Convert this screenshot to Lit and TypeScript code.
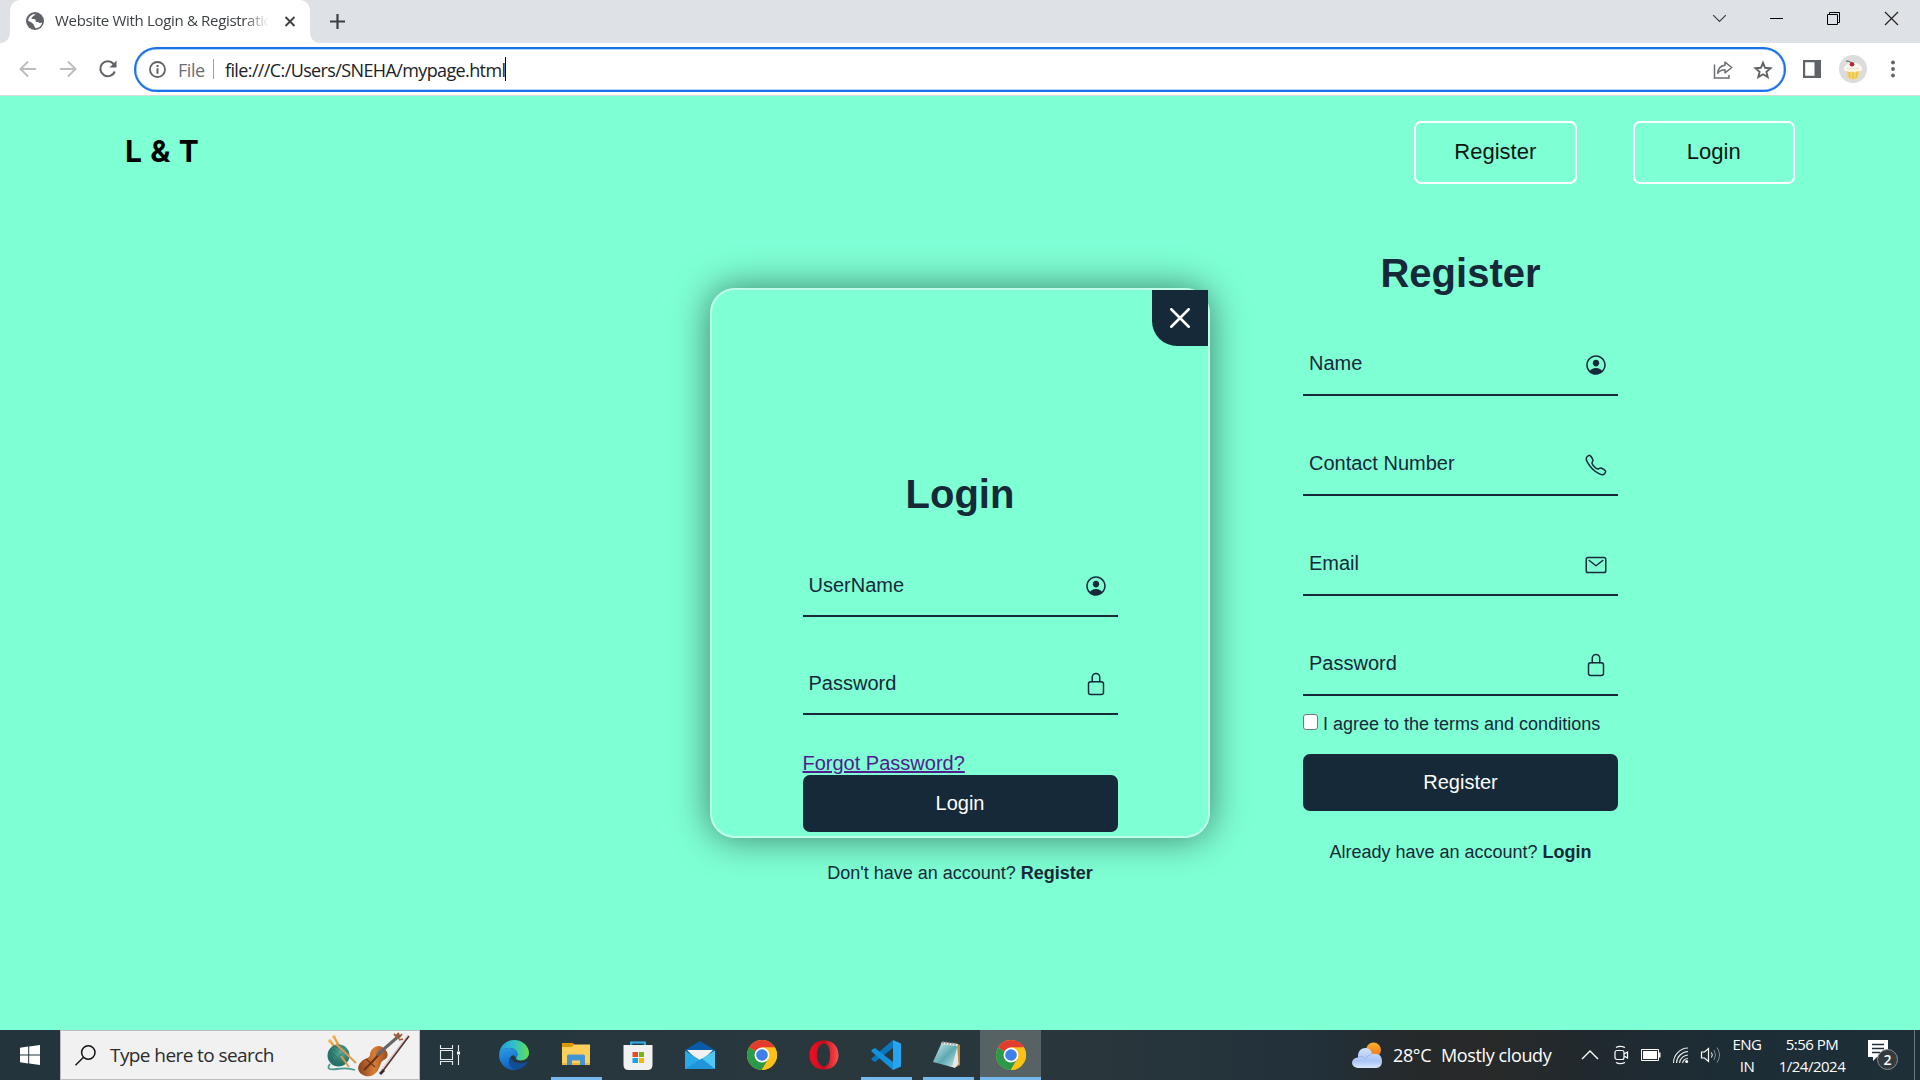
import { LitElement, html, svg, css, type TemplateResult } from "lit";
import { customElement, property } from "lit/decorators.js";

const icons: Record<string, TemplateResult> = {
  person: svg`<path fill="currentColor" d="M258.9 48C141.92 46.42 46.42 141.92 48 258.9c1.56 112.19 92.91 203.54 205.1 205.1 117 1.6 212.48-93.9 210.88-210.88C462.44 140.91 371.09 49.56 258.9 48zm126.42 327.25a4 4 0 01-6.14-.32 124.27 124.27 0 00-32.35-29.59C321.37 329 289.11 320 256 320s-65.37 9-90.83 25.34a124.24 124.24 0 00-32.35 29.58 4 4 0 01-6.14.32A175.32 175.32 0 0180 259c-1.63-97.31 78.22-178.76 175.57-179S432 158.81 432 256a175.32 175.32 0 01-46.68 119.25z"/><path fill="currentColor" d="M256 144c-19.72 0-37.55 7.39-50.22 20.82s-19 32-17.57 51.93C191.11 256 221.52 288 256 288s64.83-32 67.79-71.24c1.48-19.74-4.8-38.14-17.68-51.82C293.39 151.44 275.59 144 256 144z"/>`,
  lock: svg`<path d="M336 208v-95a80 80 0 00-160 0v95"/><rect x="96" y="208" width="320" height="272" rx="48"/>`,
  mail: svg`<rect x="48" y="96" width="416" height="320" rx="40"/><path d="M112 160l144 112 144-112"/>`,
  call: svg`<path d="M451 374c-15.88-16-54.34-39.35-73-48.76-24.3-12.24-26.3-13.24-45.4.95-12.74 9.47-21.21 17.93-36.12 14.75s-47.31-21.11-75.68-49.39-47.34-61.62-50.53-76.48 5.41-23.23 14.79-36c13.22-18 12.22-21 .92-45.3-8.81-18.9-32.84-57-48.9-72.8C119.9 44 119.9 47 108.83 51.6A160.15 160.15 0 0083 65.37C67 76 58.12 84.83 51.91 98.1s-9 44.38 23.07 102.64 54.57 88.05 101.14 134.49S258.5 406.64 310.85 436c64.76 36.27 89.6 29.2 102.91 23s22.18-15 32.83-31a159.09 159.09 0 0013.8-25.8C465 391.17 468 391.17 451 374z"/>`,
  close: svg`<path d="M368 368L144 144M368 144L144 368"/>`,
};

@customElement("ion-glyph")
class IonGlyph extends LitElement {
  @property() name = "person";
  static styles = css`
    :host { display: block; width: 24px; height: 24px; }
    svg { display: block; width: 100%; height: 100%; }
    .line { fill: none; stroke: currentColor; stroke-width: 32; stroke-linecap: round; stroke-linejoin: round; }
  `;
  render() {
    const solid = this.name === "person";
    return html`<svg viewBox="0 0 512 512"><g class=${solid ? "" : "line"}>${icons[this.name]}</g></svg>`;
  }
}

@customElement("form-field")
class FormField extends LitElement {
  @property() label = "";
  @property() icon = "person";
  static styles = css`
    :host { display: flex; justify-content: space-between; box-sizing: border-box; width: 315px; height: 62px;
      border-bottom: 2px solid #162938; padding: 0 10px 0 6px; color: #162938; }
    .label { font-size: 20px; line-height: var(--label-line, 58px); }
    ion-glyph { margin-top: 19px; }
  `;
  render() {
    return html`<span class="label">${this.label}</span><ion-glyph name=${this.icon}></ion-glyph>`;
  }
}

@customElement("browser-chrome")
class BrowserChrome extends LitElement {
  static styles = css`
    :host { display: block; font-family: "Open Sans", "Noto Sans", sans-serif; }
    svg { display: block; overflow: visible; flex: none; }
    .strip { height: 43px; background: #dee1e6; display: flex; align-items: flex-start; }
    .edge { width: 10px; height: 43px; background: radial-gradient(circle at 0 33px, #dee1e6 9.5px, #fff 10.5px) 0 0; clip-path: inset(33px 0 0 0); }
    .edge.right { background: radial-gradient(circle at 10px 33px, #dee1e6 9.5px, #fff 10.5px); }
    .tab { width: 300px; height: 43px; background: #fff; border-radius: 10px 10px 0 0; display: flex; align-items: flex-start; box-sizing: border-box; padding-left: 16px; }
    .globe { margin-top: 12px; width: 18px; height: 18px; }
    .title { margin: 8px 0 0 11px; width: 214px; overflow: hidden; white-space: nowrap; font-size: 15px; line-height: 25px; color: #3c4043; letter-spacing: -0.32px;
      -webkit-mask-image: linear-gradient(90deg, #000 88%, transparent 100%); mask-image: linear-gradient(90deg, #000 88%, transparent 100%); }
    .x { margin: 16px 0 0 16px; width: 10px; height: 11px; }
    .plus { margin: 14px 0 0 10px; width: 15px; height: 15px; }
    .window { margin-left: auto; display: flex; gap: 44.3px; padding: 12px 22.5px 0 0; }
    .window svg { width: 13px; height: 13px; }
    .bar { height: 52px; background: #fff; display: flex; align-items: center; border-bottom: 1px solid #d5dcdc; }
    .nav { width: 116px; padding-left: 18px; display: flex; gap: 20px; }
    .nav svg { width: 20px; height: 20px; }
    .pill { box-sizing: border-box; width: 1652px; height: 45px; border: 2.5px solid #1a73e8; box-shadow: inset 0 0 0 .5px #6ea6f0; border-radius: 23px; display: flex; align-items: center; padding-left: 13px; white-space: nowrap; }
    .info { width: 17px; height: 17px; }
    .scheme { margin: 2px 0 0 12px; width: 35px; font-size: 18px; letter-spacing: -0.45px; color: #6b6e72; line-height: 25px; }
    .divider { width: 1px; height: 20px; background: #9aa0a6; margin-right: 11px; }
    .url { margin-top: 2px; font-size: 18px; letter-spacing: -0.62px; color: #202124; line-height: 25px; }
    .caret { width: 1px; height: 24px; background: #000; }
    .actions { margin-left: auto; display: flex; gap: 20px; padding: 1px 11px 0 0; }
    .actions svg { width: 20px; height: 20px; }
    .tools { display: flex; align-items: center; padding-left: 17px; }
    .avatar { margin-left: 18px; }
    .dots { margin-left: 23.5px; }
  `;
  render() {
    return html`
      <div class="strip">
        <div class="edge"></div>
        <div class="tab">
          <svg class="globe" viewBox="0 0 18 18"><circle cx="9" cy="9" r="9" fill="#5f6368"/><path fill="#fff" d="M10 2.1c-1.5.3-1.2 1.6-2.6 2-.8.2-.6 1.3-1.5 1.5-.8.3-.4 1.2.3 1.4 1 .3 2.400-.2 3.200.7.8.9-.2 1.400.6 2 .9.500 2.200-.2 2.800.7.5.8 1.200.9 2.200.3.6-.4 1 .1.900.5-.7 2.700-3 4.800-6 5-1.500 0-.7-1.500-1.500-2-.9-.5-.2-1.800-1.200-2.300C6 10.900 4.300 9.300 2.200 9v-.5C2.500 5 5.600 1.800 10 2.100z"/><path fill="#5f6368" d="M9.500 3.500c-1 .5.500 1.300-.5 2.200s.8 1.700 2 1.200c1.300-.6 1.800.8 1 1.300-.7.600 1.500 1 3 .4L14.500 4.500 11 2.500z"/></svg>
          <span class="title">Website With Login &amp; Registration</span>
          <svg class="x" viewBox="0 0 10 11"><path d="M.5 1l9 9M9.500 1l-9 9" stroke="#3c4043" stroke-width="1.900"/></svg>
        </div>
        <div class="edge right"></div>
        <svg class="plus" viewBox="0 0 15 15"><path d="M7.500 0v15M0 7.500h15" stroke="#3c4043" stroke-width="2.200"/></svg>
        <div class="window">
          <svg viewBox="0 0 13 13"><path d="M.2 3.200l6.300 6.300 6.300-6.300" fill="none" stroke="#3c4043" stroke-width="1.200"/></svg>
          <svg viewBox="0 0 13 13"><path d="M0 6.500h13" stroke="#000"/></svg>
          <svg viewBox="0 0 13 13"><path d="M.5 2.500h10v10H.5zM2.500 2.500V.5h10v10h-2" fill="none" stroke="#000"/></svg>
          <svg viewBox="0 0 13 13"><path d="M0 0l13 13M13 0L0 13" stroke="#222" stroke-width="1.200"/></svg>
        </div>
      </div>
      <div class="bar">
        <div class="nav">
          <svg viewBox="0 0 20 20"><path d="M18 10H3M10 2.500L2.500 10l7.500 7.500" fill="none" stroke="#babcbe" stroke-width="1.900"/></svg>
          <svg viewBox="0 0 20 20"><path d="M2 10h15M10 2.500l7.500 7.500-7.500 7.500" fill="none" stroke="#babcbe" stroke-width="1.900"/></svg>
          <svg viewBox="0 0 20 20"><path d="M16.800 12.500A7.500 7.500 0 1 1 15.600 5" fill="none" stroke="#5f6368" stroke-width="2.100"/><path d="M18.500 1.500v7h-7z" fill="#5f6368"/></svg>
        </div>
        <div class="pill">
          <svg class="info" viewBox="0 0 17 17"><circle cx="8.500" cy="8.500" r="7.500" fill="none" stroke="#5f6368" stroke-width="1.800"/><path d="M8.500 4v2M8.500 7.300v5.400" stroke="#5f6368" stroke-width="2"/></svg>
          <span class="scheme">File</span><span class="divider"></span>
          <span class="url">file:///C:/Users/SNEHA/mypage.html</span><span class="caret"></span>
          <div class="actions">
            <svg viewBox="0 0 20 20"><path d="M1.500 4.500V18H16v-3" fill="none" stroke="#6b6e72" stroke-width="1.500"/><path d="M12 2.200l6.800 5.300-6.800 5.300v-3c-3.400 0-5.500 1-7.300 3.500C5 9 7.500 5.700 12 5.200z" fill="none" stroke="#6b6e72" stroke-width="1.500" stroke-linejoin="round"/></svg>
            <svg viewBox="0 0 20 20"><path d="M10 2.800l2.100 5 5.400.5-4.100 3.500 1.300 5.300L10 14.300l-4.700 2.800 1.300-5.300-4.100-3.500 5.400-.5z" fill="none" stroke="#5f6368" stroke-width="1.900"/></svg>
          </div>
        </div>
        <div class="tools">
          <svg width="18" height="18" viewBox="0 0 18 18"><path fill="#5f6368" fill-rule="evenodd" d="M0 0h18v18H0zM2.200 2.200v13.600h9.300V2.200z"/></svg>
          <svg class="avatar" width="28" height="28" viewBox="0 0 28 28"><circle cx="14" cy="14" r="14" fill="#dcdcdc"/><path d="M7 15h14l-2.500 8.500q-4.500 1.500-9 0z" fill="#f5d568"/><path d="M10 17l1 6M14 17v7M18 17l-1 6" stroke="#e7b93e"/><path d="M5 14.500c-.6-3 2-4 3-5 2-2.500 10-2.500 12 0 1.500 1 3.500 2.500 3 5-1 2.300-4 2-5 1.500-1.500 1.500-4 1.500-5 .3-1.500 1-3.500.8-4-.3-2 .8-3.600 0-4-1.500z" fill="#fff6ec"/><path d="M8 13.500q3 1.500 5-.5q3 2 7 0" fill="none" stroke="#ecd8c5"/><circle cx="13" cy="9.300" r="2.300" fill="#bd2430"/><path d="M12.500 8Q10 5.500 7 6" fill="none" stroke="#555"/></svg>
          <svg class="dots" width="4" height="18" viewBox="0 0 4 18"><g fill="#5f6368"><circle cx="2" cy="2.500" r="1.900"/><circle cx="2" cy="9" r="1.900"/><circle cx="2" cy="15.500" r="1.900"/></g></svg>
        </div>
      </div>`;
  }
}

@customElement("task-bar")
class TaskBar extends LitElement {
  static styles = css`
    :host { display: flex; height: 50px; color: #fff; white-space: nowrap; font-family: "Open Sans", "Noto Sans", sans-serif;
      background: linear-gradient(90deg, #23343c 0, #26363d 25%, #29383d 43%, #29373c 57%, #22313a 68%, #26292a 74%, #282a2a 78%, #20292f 83%, #1d2d35 90%, #1e2f38 100%); }
    svg { display: block; flex: none; overflow: visible; }
    .start { width: 60px; display: grid; place-items: center; }
    .search { box-sizing: border-box; width: 360px; height: 50px; background: #f1f1f1; border: 1px solid #bdbdbd; display: flex; align-items: center; padding-left: 14px; color: #2b2b2b; }
    .hint { margin-left: 14px; width: 217px; font-size: 19px; letter-spacing: -0.58px; line-height: 26px; }
    .view { width: 60px; display: grid; place-items: center; }
    .apps { display: flex; margin-left: 3px; }
    .app { width: 62px; height: 50px; box-sizing: border-box; display: grid; place-items: center; }
    .app.open { background: linear-gradient(#76b9ed, #76b9ed) center bottom / 51px 3px no-repeat; }
    .app.active { width: 61px; margin-left: 1px; background: linear-gradient(#76b9ed, #76b9ed) center bottom / 100% 3px no-repeat, #566264; }
    .tray { margin-left: auto; display: flex; align-items: center; }
    .weather { font-size: 18px; letter-spacing: -0.38px; line-height: 24px; }
    .temp { margin-left: 10px; width: 48px; }
    .sky { width: 138px; }
    .expand { margin: 0 16px 0 3px; }
    .meet, .battery, .wifi { margin-right: 12px; }
    .pair { display: flex; flex-direction: column; align-items: center; font-size: 15px; line-height: 22.5px; letter-spacing: -0.5px; }
    .lang { width: 30px; margin-left: 11px; }
    .clock { width: 68px; margin-left: 16px; }
    .note { margin-left: 22px; }
    .count { font-size: 14px; font-weight: 600; fill: #fff; }
    .peek { width: 1px; height: 50px; background: #6d777c; margin: 0 5px 0 16px; }
  `;
  chrome() {
    return svg`<circle cx="15" cy="15" r="15" fill="#fbc116"/><path d="M15 15L2 7.500A15 15 0 0 1 28 7.500H15z" fill="#e33b2e"/><path d="M2 7.500A15 15 0 0 0 14.800 30l6.700-11.500L15 15z" fill="#2a9a48"/><path d="M28 7.500A15 15 0 0 1 14.800 30l6.700-11.500L15 7.500z" fill="#fbc116"/><circle cx="15" cy="15" r="7.500" fill="#fff"/><circle cx="15" cy="15" r="5.800" fill="#3f7fe8"/>`;
  }
  app(content: TemplateResult, state = "") {
    return html`<div class="app ${state}"><svg width="30" height="30" viewBox="0 0 30 30">${content}</svg></div>`;
  }
  render() {
    return html`
      <div class="start"><svg width="20" height="20" viewBox="0 0 20 20"><path fill="#fff" d="M0 2.700L8.200 1.500v8H0zM9.200 1.400L20 0v9.500H9.200zM0 10.500h8.200v8L0 17.300zM9.200 10.500H20V20L9.200 18.500z"/></svg></div>
      <div class="search">
        <svg width="21" height="21" viewBox="0 0 21 21"><circle cx="13.300" cy="7.500" r="6.700" fill="none" stroke="#111" stroke-width="1.500"/><path d="M8.500 12.300L.5 20.300" stroke="#111" stroke-width="1.500"/></svg>
        <span class="hint">Type here to search</span>
        <svg width="84" height="44" viewBox="0 0 84 44">
          <defs><radialGradient id="yarn" cx=".6" cy=".35"><stop offset="0" stop-color="#58ab9b"/><stop offset="1" stop-color="#277568"/></radialGradient><linearGradient id="wood"><stop offset="0" stop-color="#8b411c"/><stop offset=".55" stop-color="#d87d35"/><stop offset="1" stop-color="#9a4d20"/></linearGradient></defs>
          <path d="M3 31c-4 5 0 6 7 5s12-1 18 1" fill="none" stroke="#4a9b8b" stroke-width="1.800"/>
          <path d="M3 8l8 10M7 4l7 12" stroke="#ef9f42" stroke-width="2.400"/><circle cx="3" cy="8" r="1.800" fill="#f5b04d"/><circle cx="7" cy="4" r="1.800" fill="#f5b04d"/>
          <circle cx="11.500" cy="22.500" r="11" fill="url(#yarn)"/>
          <path d="M2 19q9 3 13 14M3 16q11 2 16 14M6 13q10 2 15 13M3 26q4 1 6 7M13 12q-9 6-11 14M17 14q-11 5-13 15M21 18q-10 3-13 14" fill="none" stroke="#1f665b" stroke-width=".5" opacity=".7"/>
          <path d="M9 11l20 19M14 23l8 11" stroke="#e39a50" stroke-width="2"/>
          <path d="M34 29c3-4 8-3 9-7 0-6 7-11 12-8 6 3 8 10 2 13-4 2-3 5-5 8-3 8-11 10-16 7-6-3-6-9-2-13z" fill="url(#wood)"/>
          <path d="M37 37l9-9 8-9" stroke="#6b341d" stroke-width="2.200"/><path d="M50 22L73 2" stroke="#66666a" stroke-width="3"/><path d="M71 6l4-5M67 1l4 4M72 7l4-1M69 3l3-3" stroke="#a35a35" stroke-width="1.800"/><path d="M39 26l9 8" stroke="#70331b" stroke-width="1.200"/>
          <path d="M55 39L82 3" stroke="#5f3030" stroke-width="1.700"/><path d="M54 37L81 2" stroke="#c9b8bc" stroke-width=".8"/><path d="M53 41l4-4" stroke="#37262a" stroke-width="2.800"/>
        </svg>
      </div>
      <div class="view"><svg width="20" height="20" viewBox="0 0 20 20"><path d="M.5 0v3.500h12V0M.5 20v-3.500h12V20M.5 5.500h12v9H.5zM18.500 0v6M18.500 10v10" fill="none" stroke="#e8ecec" stroke-width="1.100"/><path d="M17 6.500h3v3h-3z" fill="#fff"/></svg></div>
      <div class="apps">
        ${this.app(svg`<defs><linearGradient id="ea" x2="1"><stop offset="0" stop-color="#249be0"/><stop offset=".5" stop-color="#2fc1c8"/><stop offset="1" stop-color="#62df52"/></linearGradient><linearGradient id="eb" y2="1" x2=".3"><stop offset="0" stop-color="#2ea0e8"/><stop offset="1" stop-color="#0e62bd"/></linearGradient></defs><path d="M.3 13C1.500 5 8 0 15 0c9 0 15 6.500 15 13 0 4.500-3.700 7.500-8 7.500-3.500 0-5-1.300-5-2.200 0-.8 1.500-1.500 1.500-4C18.500 11 15 8 10.500 8 6 8 2 10 .3 13z" fill="url(#ea)"/><path d="M.3 13C2 9.500 6 8 10.500 8c4.500 0 8 3 8 6.300 0 1.500-1 3-1.500 4-1.500-4-3-3.500-4.500-2.300-4 3-3 11 4.500 13.700C7 31.500-1.200 23 .3 13z" fill="url(#eb)"/><path d="M11.700 17c-3.500 5-1 11 5 12.800 6-.5 10.500-4.500 11.700-7.300.3-.7-.2-1-.8-.7-6.500 3.300-14.900 1.200-15.900-4.800z" fill="#114d98"/>`)}
        ${this.app(svg`<path d="M1 3h11l2 3v5H1z" fill="#dc9a08"/><path d="M1 7h10l2-2.500h16V25H1z" fill="#fcd05b"/><path d="M1 23h28v2H1z" fill="#e9b83f"/><path d="M6 25V16q0-1.500 1.500-1.500h15q1.500 0 1.500 1.500v9h-5v-4.500h-8V25z" fill="#4494d4"/>`, "open")}
        ${this.app(svg`<path d="M8 7V2.500h14V7" fill="none" stroke="#31a8e0" stroke-width="2"/><path d="M.5 5h29v20q0 5-5 5h-19q-5 0-5-5z" fill="#f1f1f1"/><path fill="#e94b24" d="M9.500 12H15v5H9.500z"/><path fill="#76b80a" d="M16 12h5v5h-5z"/><path fill="#12a4e7" d="M9.500 18H15v5H9.500z"/><path fill="#fbb400" d="M16 18h5v5h-5z"/><path d="M8.500 5V2.500h13V5" fill="none" stroke="#31a8e0" stroke-width="1.600"/>`)}
        ${this.app(svg`<path d="M0 10L15 1l15 9-15 10z" fill="#075ba7"/><path d="M2 10h26L15 23z" fill="#f2f2f2"/><path d="M0 10.500L15 20 30 10.500V29H0z" fill="#28a9e8"/><path d="M15 20l15-9.500V29z" fill="#50c8f4"/><path d="M0 29l17-10.500L30 29z" fill="#2095dc"/>`)}
        ${this.app(this.chrome())}
        ${this.app(svg`<defs><linearGradient id="op" x2="1"><stop offset="0" stop-color="#f20f24"/><stop offset=".5" stop-color="#c50d1c"/><stop offset="1" stop-color="#ff4e50"/></linearGradient></defs><path fill="url(#op)" fill-rule="evenodd" d="M15 .5C6 .5.5 6.500.5 15S6 29.500 15 29.500 29.500 23.500 29.500 15 24 .5 15 .5zM15 3.500c4 0 6 5 6 11.500s-2 11.500-6 11.500S8 21.500 8 15 11 3.500 15 3.500z"/>`)}
        ${this.app(svg`<path d="M22 0l8 3.500v23L22 30z" fill="#27a4ed"/><path d="M22 0v8L4 22l-3.500-2v-1.500z" fill="#0878bd"/><path d="M22 30v-8L4 8 .5 10v1.500z" fill="#1591dc"/>`, "open")}
        ${this.app(svg`<defs><linearGradient id="np" x2="1" y2="1"><stop offset="0" stop-color="#d7eff1"/><stop offset=".55" stop-color="#5da9b2"/><stop offset="1" stop-color="#cce9ec"/></linearGradient></defs><path d="M24 4l3 1v20l-4 2z" fill="#b9873d"/><path d="M24 3.500l1.500 20.500-3.500 4-6-2z" fill="#e5e8e8"/><path d="M9 2l16 2-6 23L0 22z" fill="url(#np)"/><path d="M9 2l16 2-.6 2L8 4.200z" fill="#e8e8e8"/><path d="M10 1v3M13 1.300v3M16 1.700v3M19 2v3M22 2.500v3" stroke="#777"/>`, "open")}
        ${this.app(this.chrome(), "active")}
      </div>
      <div class="tray">
        <svg width="31" height="26" viewBox="0 0 31 26"><defs><linearGradient id="cl" y2="1" x2="0"><stop offset="0" stop-color="#d4e2fb"/><stop offset=".65" stop-color="#a9c4f5"/><stop offset="1" stop-color="#dbe7ff"/></linearGradient><linearGradient id="su" y2="1" x2="0"><stop offset="0" stop-color="#fbb22f"/><stop offset="1" stop-color="#ef6d12"/></linearGradient></defs><circle cx="21.500" cy="8" r="7.500" fill="url(#su)"/><path d="M7 26c-9 0-9-10-1-10.500C5 4 19 3 20 12c7-1.500 10 2 10 7 0 4-2 7-6 7z" fill="url(#cl)"/><path d="M5.500 15.500q5-3 8 1.500 2-4 6.500-5" fill="none" stroke="#86a9e5" opacity=".6"/></svg>
        <span class="weather temp">28°C</span><span class="weather sky">Mostly cloudy</span>
        <svg class="expand" width="16" height="10" viewBox="0 0 16 10"><path d="M0 9l8-8 8 8" fill="none" stroke="#fff" stroke-width="1.400"/></svg>
        <svg class="meet" width="15" height="18" viewBox="0 0 15 18"><g fill="none" stroke="#fff" stroke-width="1.200"><rect x="1" y="4.500" width="9" height="9" rx="2"/><path d="M10 8l3.500-2v6L10 10M2 1.500Q6-.8 11 1.500M2 16.500q4 2.300 9 0"/></g></svg>
        <svg class="battery" width="20" height="12" viewBox="0 0 20 12"><path d="M.5.5h17v11H.5z" fill="none" stroke="#fff"/><path d="M2 2h14v8H2zM18 3.500h1.500v5H18z" fill="#fff"/></svg>
        <svg class="wifi" width="16" height="17" viewBox="0 0 16 17"><g fill="none" stroke="#e7eaeb" stroke-width="1.100"><path d="M.5 16A15 15 0 0 1 15 1"/><path d="M3.500 16A12 12 0 0 1 15 4.500"/><path d="M6.500 16A9 9 0 0 1 15 8"/><path d="M9.500 16A6 6 0 0 1 15 11.500"/></g><circle cx="13.700" cy="14.500" r="1.500" fill="#fff"/></svg>
        <svg width="20" height="18" viewBox="0 0 20 18"><path d="M.5 6h3L7.500 2.500v13L3.500 12h-3z" fill="none" stroke="#fff" stroke-width="1.200"/><path d="M10.500 6.500q1.500 2.500 0 5" fill="none" stroke="#fff"/><path d="M13 4q3 5 0 10M16 1.500q5 7.500 0 15" fill="none" stroke="#819096"/></svg>
        <div class="pair lang"><span>ENG</span><span>IN</span></div>
        <div class="pair clock"><span>5:56 PM</span><span>1/24/2024</span></div>
        <svg class="note" width="30" height="30" viewBox="0 0 30 30"><path d="M0 0h20v17H9l-4 4v-4H0z" fill="#fff"/><path d="M4 4.500h12M4 8.500h12M4 12.500h8" stroke="#20303a" stroke-width="1.300"/><circle cx="19.500" cy="19.500" r="10" fill="#343b3f" stroke="#899094"/><text class="count" x="19.500" y="24.500" text-anchor="middle">2</text></svg>
        <div class="peek"></div>
      </div>`;
  }
}

@customElement("app-root")
class AppRoot extends LitElement {
  static styles = css`
    :host { display: block; width: 1920px; height: 1080px; overflow: hidden; font-family: "Liberation Sans", Arial, sans-serif; color: #162938; }
    .page { height: 934px; background: #7fffd4; }
    header { height: 112px; display: flex; align-items: center; padding: 0 125px 0 125px; box-sizing: border-box; color: #000; }
    .logo { margin: 0 0 2px; font-family: Inter, "Open Sans", sans-serif; font-size: 30px; font-weight: 700; line-height: 40px; letter-spacing: .6px; white-space: pre; }
    nav { margin-left: auto; display: flex; gap: 56px; }
    .link { box-sizing: border-box; width: 162.5px; height: 63px; border: 2px solid #fff; border-radius: 7px; font-size: 22px; line-height: 57px; text-align: center; color: #0b1512; }
    main { display: flex; align-items: flex-start; padding-left: 710px; gap: 93px; }
    .modal { margin-top: 80px; box-sizing: border-box; width: 500px; height: 550px; border: 2px solid rgba(255,255,255,.5); border-radius: 25px; box-shadow: 0 0 37.5px rgba(0,0,0,.5); display: flex; flex-direction: column; align-items: center; }
    .close { align-self: flex-end; flex: none; width: 56px; height: 56px; background: #162938; color: #fff; border-bottom-left-radius: 25px; display: grid; place-items: center; }
    .close ion-glyph { width: 40px; height: 40px; }
    .form { width: 315px; display: flex; flex-direction: column; font-size: 18px; }
    .signin { margin-top: 125px; --label-line: 60px; }
    .signup { margin-top: 42px; }
    h2 { margin: 0; font-size: 40px; line-height: 46px; text-align: center; }
    .signin form-field { margin-top: 36px; }
    .signin h2 + form-field { margin-top: 38px; }
    .signup form-field { margin-top: 38px; }
    .forgot { margin-top: 36px; font-size: 20px; line-height: 24px; height: 24px; color: #551a8b; text-decoration: underline; }
    .submit { height: 57px; border: 0; padding: 0; border-radius: 7px; background: #162938; color: #fff; font: 500 20px/57px "Liberation Sans", Arial, sans-serif; }
    .switch { text-align: center; line-height: 20px; white-space: nowrap; }
    .signin .switch { margin-top: 31px; }
    .signup .switch { margin-top: 31px; }
    .terms { display: flex; margin-top: 18px; height: 20px; line-height: 20px; gap: 5px; white-space: nowrap; }
    .box { box-sizing: border-box; width: 15px; height: 16px; background: #fff; border: 1px solid #767676; border-radius: 3px; }
    .signup .submit { margin-top: 20px; }
  `;
  render() {
    return html`
      <browser-chrome></browser-chrome>
      <div class="page">
        <header>
          <h2 class="logo">L &amp; T</h2>
          <nav><div class="link">Register</div><div class="link">Login</div></nav>
        </header>
        <main>
          <section class="modal">
            <div class="close"><ion-glyph name="close"></ion-glyph></div>
            <div class="form signin">
              <h2>Login</h2>
              <form-field label="UserName" icon="person"></form-field>
              <form-field label="Password" icon="lock"></form-field>
              <a class="forgot">Forgot Password?</a>
              <button class="submit">Login</button>
              <div class="switch">Don't have an account? <b>Register</b></div>
            </div>
          </section>
          <section class="form signup">
            <h2>Register</h2>
            <form-field label="Name" icon="person"></form-field>
            <form-field label="Contact Number" icon="call"></form-field>
            <form-field label="Email" icon="mail"></form-field>
            <form-field label="Password" icon="lock"></form-field>
            <div class="terms"><span class="box"></span><span>I agree to the terms and conditions</span></div>
            <button class="submit">Register</button>
            <div class="switch">Already have an account? <b>Login</b></div>
          </section>
        </main>
      </div>
      <task-bar></task-bar>`;
  }
}
